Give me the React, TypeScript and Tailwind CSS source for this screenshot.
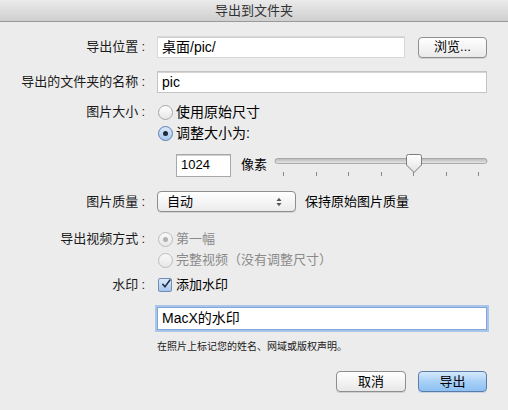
import React from "react";

const font = {
  fontFamily: '"Liberation Sans", "Noto Sans CJK SC", sans-serif',
};

// 왼쪽 라벨 + 오른쪽 컨텐츠
function Row({
  label,
  className = "",
  children,
}: {
  label?: string;
  className?: string;
  children: React.ReactNode;
}) {
  return (
    <div className={`flex items-center ${className}`}>
      <div className="w-[145px] shrink-0 text-right text-[13px] text-[#1a1a1a]">
        {label && (
          <>
            {label}
            <span className="ml-[3px]">:</span>
          </>
        )}
      </div>
      <div className="ml-[12px] flex flex-1 items-center pr-[21px]">{children}</div>
    </div>
  );
}

function Radio({ checked, disabled }: { checked?: boolean; disabled?: boolean }) {
  return (
    <span
      className={`flex h-[15px] w-[15px] shrink-0 items-center justify-center rounded-full border ${
        checked && !disabled
          ? "border-[#5a7fb0] bg-gradient-to-b from-[#d8e8fa] to-[#a9c9ee]"
          : "border-[#a8a8a8] bg-gradient-to-b from-[#ffffff] to-[#e6e6e6]"
      } ${disabled ? "opacity-70" : ""}`}
    >
      {checked && (
        <span
          className={`h-[5px] w-[5px] rounded-full ${
            disabled ? "bg-[#9a9a9a]" : "bg-[#1e2a3a]"
          }`}
        />
      )}
    </span>
  );
}

function Slider() {
  const ticks = [283, 316, 348, 381, 413, 446, 478];
  return (
    <svg width="214" height="26" viewBox="274 150 214 26" className="block shrink-0">
      <defs>
        <linearGradient id="trk" x1="0" y1="0" x2="0" y2="1">
          <stop offset="0" stopColor="#b8b8b8" />
          <stop offset="1" stopColor="#e8e8e8" />
        </linearGradient>
        <linearGradient id="knob" x1="0" y1="0" x2="0" y2="1">
          <stop offset="0" stopColor="#ffffff" />
          <stop offset="1" stopColor="#e2e2e2" />
        </linearGradient>
      </defs>
      <rect x="275" y="156.5" width="212" height="5" rx="2.5" fill="url(#trk)" stroke="#9c9c9c" strokeWidth="0.8" />
      {ticks.map((t) => (
        <line key={t} x1={t + 0.5} y1="170" x2={t + 0.5} y2="174" stroke="#8a8a8a" strokeWidth="1" />
      ))}
      <path
        d="M406.5 154.5 Q406.5 152.5 408.5 152.5 H419.5 Q421.5 152.5 421.5 154.5 V163 L414 170.5 L406.5 163 Z"
        fill="url(#knob)"
        stroke="#7c7c7c"
        strokeWidth="1"
      />
    </svg>
  );
}

export default function App() {
  return (
    <div style={font} className="h-[410px] w-[508px] overflow-hidden bg-[#ececec] text-[13px] text-black">
      {/* 타이틀 바 */}
      <div className="flex h-[22px] items-center justify-center border-b border-[#9a9a9a] bg-gradient-to-b from-[#ebebeb] to-[#cfcfcf] text-[13px] text-[#333]">
        导出到文件夹
      </div>

      <Row label="导出位置" className="mt-[14px] h-[22px]">
        <div className="flex h-[22px] w-[248px] items-center border border-[#d8d8d8] bg-white px-[4px] text-[14px] shadow-[inset_0_1px_0_#cfcfcf]">
          桌面/pic/
        </div>
        <button className="ml-[13px] flex h-[21px] w-[69px] items-center justify-center rounded-[4px] border border-[#8e8e8e] bg-gradient-to-b from-[#ffffff] to-[#e9e9e9] text-[13px] shadow-[0_1px_0_#d0d0d0]">
          浏览...
        </button>
      </Row>

      <Row label="导出的文件夹的名称" className="mt-[13px] h-[22px]">
        <div className="flex h-[22px] flex-1 items-center border border-[#c4c4c4] bg-white px-[4px] text-[14px] shadow-[inset_0_1px_0_#d4d4d4]">
          pic
        </div>
      </Row>

      <Row label="图片大小" className="mt-[9px] h-[20px]">
        <span className="ml-[1px]"><Radio /></span>
        <span className="ml-[3px] text-[14px]">使用原始尺寸</span>
      </Row>
      <Row className="mt-[1px] h-[20px]">
        <span className="ml-[1px]"><Radio checked /></span>
        <span className="ml-[3px] text-[14px]">调整大小为:</span>
      </Row>

      <Row className="mt-[10px] h-[24px]">
        <div className="ml-[19px] flex h-[23px] w-[55px] shrink-0 items-center border border-[#a8a8a8] bg-white px-[4px] text-[13px] shadow-[inset_0_1px_0_#cfcfcf]">
          1024
        </div>
        <span className="ml-[10px] shrink-0 whitespace-nowrap text-[13px]">像素</span>
        <span className="ml-[7px] shrink-0 self-start">
          <Slider />
        </span>
      </Row>

      <Row label="图片质量" className="mt-[14px] h-[21px]">
        <div className="relative flex h-[21px] w-[139px] items-center rounded-[4px] border border-[#8e8e8e] bg-gradient-to-b from-[#ffffff] to-[#ebebeb] pl-[9px] text-[13px] shadow-[0_1px_0_#d4d4d4]">
          自动
          <svg width="6" height="10" viewBox="0 0 6 10" className="absolute right-[13px] top-[5px]">
            <path d="M0.5 4 L3 0.8 L5.5 4 Z" fill="#555" />
            <path d="M0.5 6 L3 9.2 L5.5 6 Z" fill="#555" />
          </svg>
        </div>
        <span className="ml-[9px] text-[13px]">保持原始图片质量</span>
      </Row>

      <Row label="导出视频方式" className="mt-[17px] h-[20px]">
        <span className="ml-[1px]"><Radio checked disabled /></span>
        <span className="ml-[3px] text-[13px] text-[#8a8a8a]">第一幅</span>
      </Row>
      <Row className="mt-[1px] h-[20px]">
        <span className="ml-[1px]"><Radio disabled /></span>
        <span className="ml-[3px] text-[13px] text-[#8a8a8a]">完整视频（没有调整尺寸）</span>
      </Row>

      <Row label="水印" className="mt-[5px] h-[20px]">
        <span className="ml-[1px] flex h-[14px] w-[14px] items-center justify-center rounded-[2px] border border-[#6f8db5] bg-gradient-to-b from-[#dceafb] to-[#a6c6ec]">
          <svg width="14" height="14" viewBox="0 0 14 14" className="-mt-[3px] ml-[2px]">
            <path d="M2.5 7.5 L5.5 11 L12.5 1.5" fill="none" stroke="#1b2b40" strokeWidth="2.2" strokeLinecap="round" strokeLinejoin="round" />
          </svg>
        </span>
        <span className="ml-[4px] text-[13px]">添加水印</span>
      </Row>

      <Row className="mt-[12px] h-[23px]">
        <div className="flex h-[23px] flex-1 items-center border border-[#7fa6d9] bg-white px-[4px] text-[14px] shadow-[0_0_0_2px_#a9c6ea]">
          MacX的水印
        </div>
      </Row>

      <Row className="mt-[10px] h-[12px]">
        <span className="text-[10px] text-[#1a1a1a]">在照片上标记您的姓名、网域或版权声明。</span>
      </Row>

      <div className="mt-[19px] flex justify-end gap-[12px] pr-[21px]">
        <button className="flex h-[21px] w-[70px] items-center justify-center rounded-[4px] border border-[#8e8e8e] bg-gradient-to-b from-[#ffffff] to-[#e8e8e8] text-[13px] shadow-[0_1px_0_#d0d0d0]">
          取消
        </button>
        <button className="flex h-[21px] w-[69px] items-center justify-center rounded-[4px] border border-[#5b7ca8] bg-gradient-to-b from-[#d6e9fc] via-[#a8d0f7] to-[#8cc1f2] text-[13px] shadow-[0_1px_0_#c8d4e2]">
          导出
        </button>
      </div>
    </div>
  );
}
